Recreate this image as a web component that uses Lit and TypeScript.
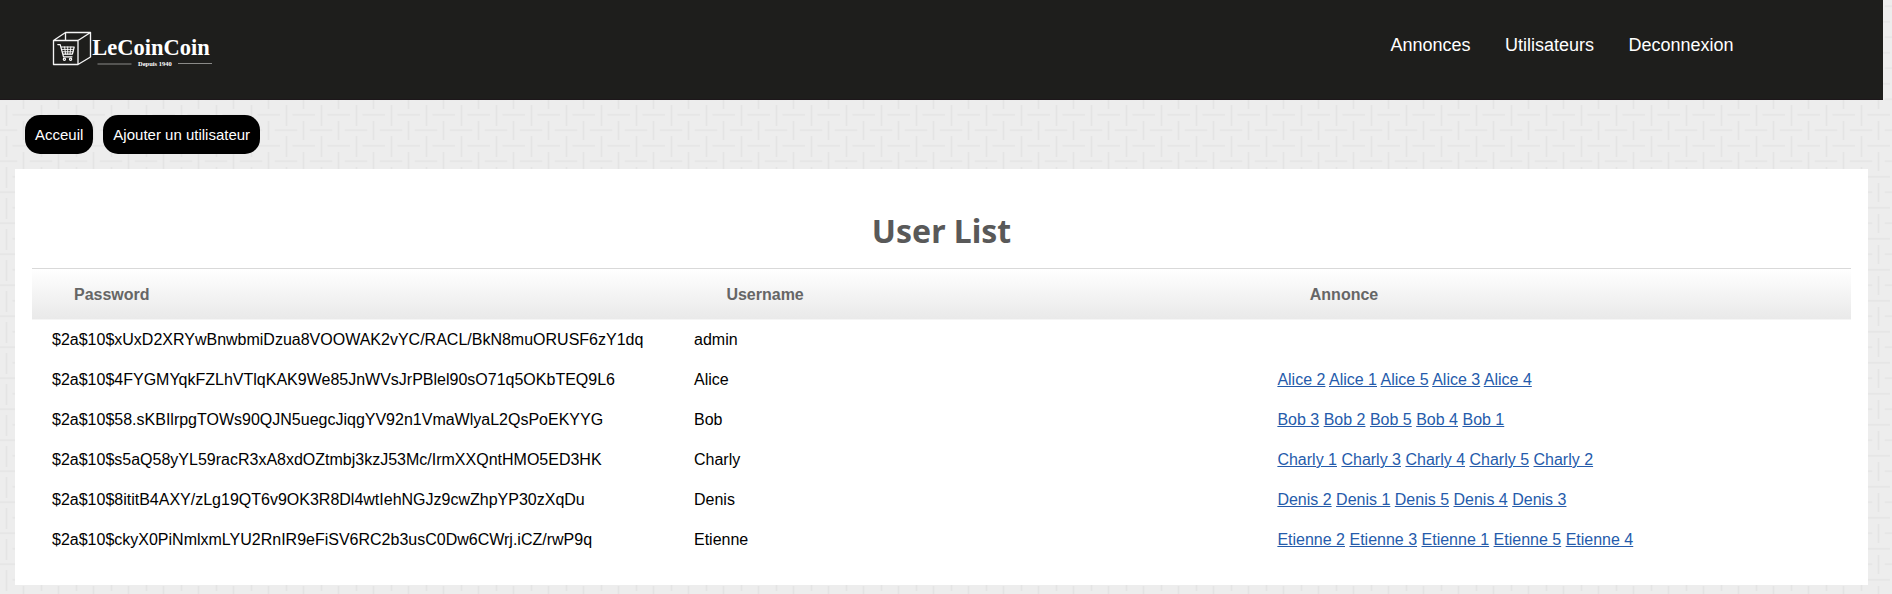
import { LitElement, html, css, svg } from "lit";
import { customElement } from "lit/decorators.js";

interface User {
  password: string;
  username: string;
  annonces: string[];
}

const ads = (name: string, order: number[]) => order.map((n) => `${name} ${n}`);

const USERS: User[] = [
  { password: "$2a$10$xUxD2XRYwBnwbmiDzua8VOOWAK2vYC/RACL/BkN8muORUSF6zY1dq", username: "admin", annonces: [] },
  { password: "$2a$10$4FYGMYqkFZLhVTlqKAK9We85JnWVsJrPBlel90sO71q5OKbTEQ9L6", username: "Alice", annonces: ads("Alice", [2, 1, 5, 3, 4]) },
  { password: "$2a$10$58.sKBIlrpgTOWs90QJN5uegcJiqgYV92n1VmaWlyaL2QsPoEKYYG", username: "Bob", annonces: ads("Bob", [3, 2, 5, 4, 1]) },
  { password: "$2a$10$s5aQ58yYL59racR3xA8xdOZtmbj3kzJ53Mc/IrmXXQntHMO5ED3HK", username: "Charly", annonces: ads("Charly", [1, 3, 4, 5, 2]) },
  { password: "$2a$10$8ititB4AXY/zLg19QT6v9OK3R8Dl4wtIehNGJz9cwZhpYP30zXqDu", username: "Denis", annonces: ads("Denis", [2, 1, 5, 4, 3]) },
  { password: "$2a$10$ckyX0PiNmlxmLYU2RnIR9eFiSV6RC2b3usC0Dw6CWrj.iCZ/rwP9q", username: "Etienne", annonces: ads("Etienne", [2, 3, 1, 5, 4]) },
];

// Front face, lid and side of the crate.
const crate = svg`
  <path d="M1.5 14.5H26V38.5H1.5ZM1.5 14.5L13.5 6.5H38.5L26 14.5M38.5 6.5V31L26 38.5M13.5 6.5V14.5"
    fill="none" stroke="#f4f4f4" stroke-width="1.35" stroke-linejoin="round"/>`;

const cart = svg`
  <g fill="none" stroke="#fff" stroke-linecap="round" stroke-linejoin="round">
    <path d="M5.8 18.6H8.2L11.5 30.8H20M8.9 21H22.2L20.4 28.2H11" stroke-width="1.2"/>
    <path d="M9.7 23.4H21.6M10.5 25.8H21M12.6 21L13.6 28M15.7 21V28M18.8 21L18 28" stroke-width=".9"/>
    <circle cx="12.4" cy="33.2" r="1.1" stroke-width="1.2"/>
    <circle cx="18.6" cy="33.2" r="1.1" stroke-width="1.2"/>
  </g>`;

@customElement("app-root")
export class AppRoot extends LitElement {
  static styles = css`
    :host {
      display: block;
      position: relative;
      height: 594px;
      overflow: hidden;
      background: #ededed;
      font-family: "Liberation Sans", Arial, sans-serif;
      font-size: 16px;
      color: #000;
    }
    .weave {
      position: absolute;
      inset: 0;
      width: 100%;
      height: 100%;
    }
    .page {
      position: relative;
      width: 1883px;
    }
    .top {
      display: flex;
      justify-content: space-between;
      height: 100px;
      box-sizing: border-box;
      padding: 26px 149.5px 0 52px;
      background: #1e1e1c;
      border-bottom: 1px solid #1d171a;
    }
    .logo {
      display: block;
      width: 162px;
      height: 44px;
    }
    .brand {
      font: bold 22.5px "Liberation Serif", serif;
      fill: #fff;
    }
    .since {
      font: bold 6.5px "Liberation Serif", serif;
      fill: #fff;
    }
    .nav {
      display: flex;
      gap: 34.4px;
      font-size: 18px;
      line-height: 38px;
    }
    .nav a {
      color: #fff;
      text-decoration: none;
    }
    .actions {
      display: flex;
      gap: 10px;
      padding: 15px 25px;
      font-size: 15px;
      line-height: 39px;
    }
    .button {
      padding: 0 10px;
      border-radius: 15px;
      background: #000;
      color: #fff;
      text-decoration: none;
    }
    .card {
      margin: 0 15px;
      padding: 0 17px;
      height: 416px;
      box-sizing: border-box;
      background: #fff;
    }
    .title {
      margin: 0;
      padding-top: 40px;
      height: 99px;
      box-sizing: border-box;
      text-align: center;
      font: bold 32px/44px "Noto Sans", sans-serif;
      color: #595959;
    }
    .row {
      display: grid;
      grid-template-columns: 642px 583.4px 1fr;
      line-height: 40px;
      white-space: nowrap;
    }
    .row > div {
      padding-left: 20px;
    }
    .head {
      box-sizing: border-box;
      height: 52px;
      line-height: 51px;
      border-top: 1px solid #d9d9d9;
      border-bottom: 1px solid #f5f5f5;
      background: linear-gradient(#fff, #e9e9e9) padding-box;
      font-weight: bold;
      color: #666;
    }
    .head > div {
      padding-left: 52.4px;
    }
    .head > div:first-child {
      padding-left: 42px;
    }
    .link {
      color: #255bab;
      text-decoration: underline;
    }
  `;

  render() {
    return html`
      <svg class="weave">
        <defs>
          <pattern id="w" width="35" height="31" patternUnits="userSpaceOnUse">
            <path d="M12.5 21.8H35M0 6.3H17.3M29.7 6.3H35" stroke="#e6e6e6" stroke-width="2" />
            <path d="M6.5 12V31M6.5 0V2M23.5 0V16M23.5 28V31" stroke="#e4e4e4" stroke-width="1.6" />
          </pattern>
        </defs>
        <rect width="100%" height="100%" fill="url(#w)" />
      </svg>
      <div class="page">
        <header class="top">
          <svg class="logo" viewBox="0 0 162 44">
            ${crate}${cart}
            <text class="brand" x="40.3" y="29">LeCoinCoin</text>
            <text class="since" x="86" y="39.6">Depuis 1940</text>
            <path d="M45.5 38H79.5M126 37.5H160" stroke="#8a8a88" stroke-width="1" />
          </svg>
          <nav class="nav">
            ${["Annonces", "Utilisateurs", "Deconnexion"].map((t) => html`<a href="#">${t}</a>`)}
          </nav>
        </header>
        <div class="actions">
          ${["Acceuil", "Ajouter un utilisateur"].map((t) => html`<a class="button" href="#">${t}</a>`)}
        </div>
        <main class="card">
          <h1 class="title">User List</h1>
          <div class="row head">
            <div>Password</div>
            <div>Username</div>
            <div>Annonce</div>
          </div>
          ${USERS.map(
            (u) => html`<div class="row">
              <div>${u.password}</div>
              <div>${u.username}</div>
              <div>${u.annonces.map((a) => html`<a class="link" href="#">${a}</a> `)}</div>
            </div>`
          )}
        </main>
      </div>
    `;
  }
}
